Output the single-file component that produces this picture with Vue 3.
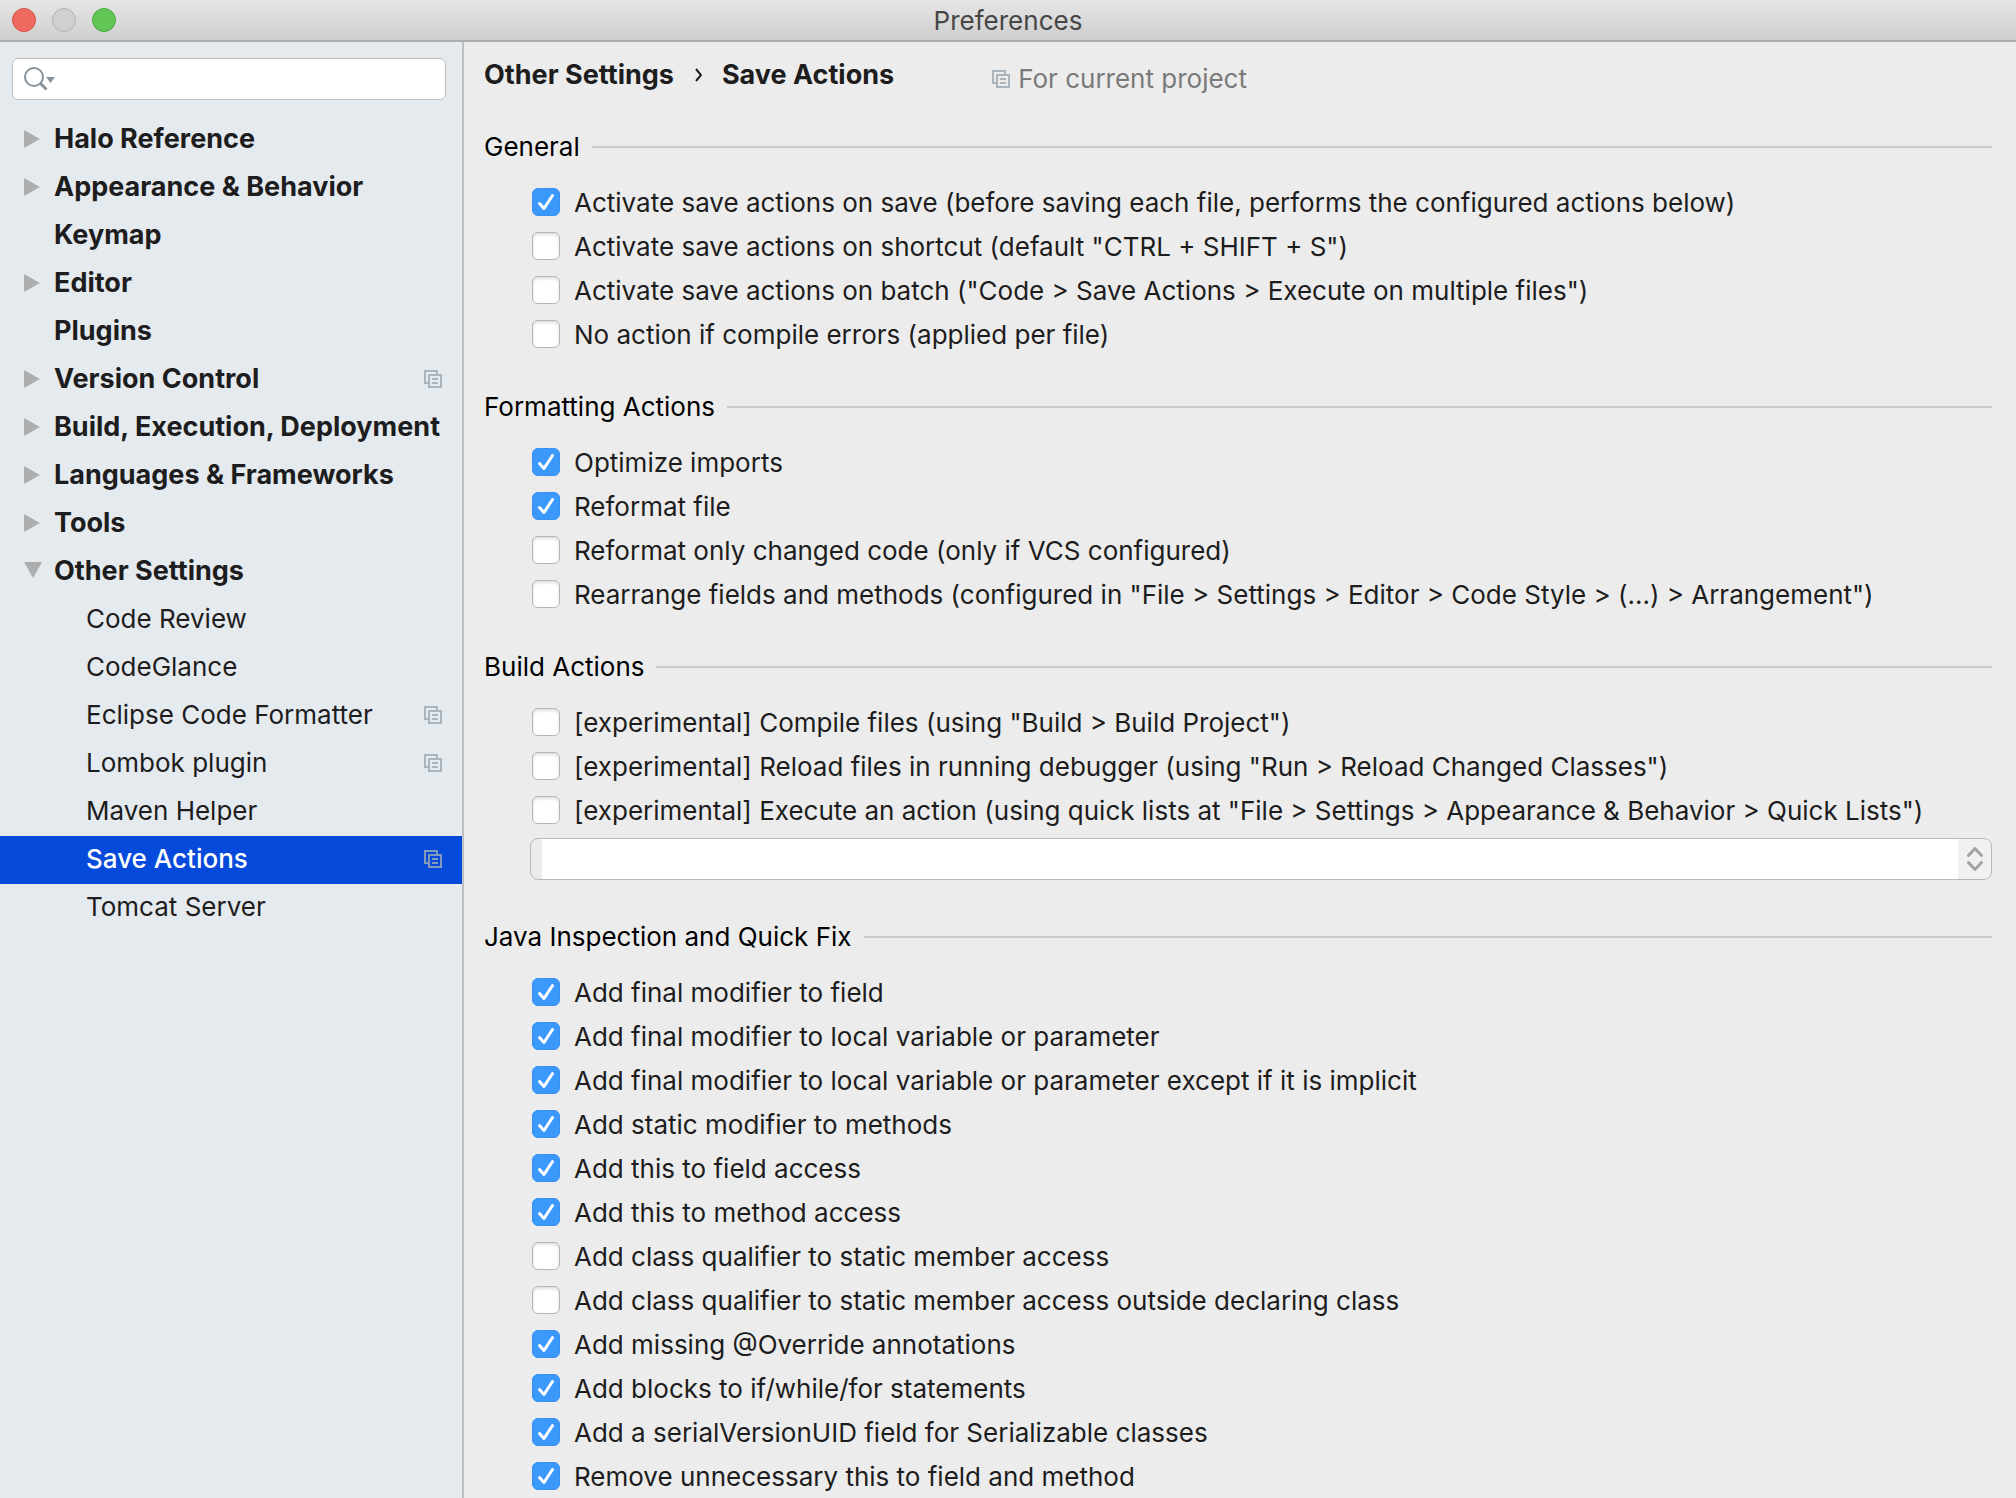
<script setup>
import { ref, reactive } from 'vue'

const query = ref('')
const selected = ref('Save Actions')
const quickList = ref('')

const tree = [
  { label: 'Halo Reference', group: true, arrow: 'closed' },
  { label: 'Appearance & Behavior', group: true, arrow: 'closed' },
  { label: 'Keymap', group: true },
  { label: 'Editor', group: true, arrow: 'closed' },
  { label: 'Plugins', group: true },
  { label: 'Version Control', group: true, arrow: 'closed', project: true },
  { label: 'Build, Execution, Deployment', group: true, arrow: 'closed' },
  { label: 'Languages & Frameworks', group: true, arrow: 'closed' },
  { label: 'Tools', group: true, arrow: 'closed' },
  { label: 'Other Settings', group: true, arrow: 'open' },
  { label: 'Code Review' },
  { label: 'CodeGlance' },
  { label: 'Eclipse Code Formatter', project: true },
  { label: 'Lombok plugin', project: true },
  { label: 'Maven Helper' },
  { label: 'Save Actions', project: true },
  { label: 'Tomcat Server' }
]

const sections = reactive([
  {
    title: 'General',
    options: [
      { label: 'Activate save actions on save (before saving each file, performs the configured actions below)', on: true },
      { label: 'Activate save actions on shortcut (default "CTRL + SHIFT + S")', on: false },
      { label: 'Activate save actions on batch ("Code > Save Actions > Execute on multiple files")', on: false },
      { label: 'No action if compile errors (applied per file)', on: false }
    ]
  },
  {
    title: 'Formatting Actions',
    options: [
      { label: 'Optimize imports', on: true },
      { label: 'Reformat file', on: true },
      { label: 'Reformat only changed code (only if VCS configured)', on: false },
      { label: 'Rearrange fields and methods (configured in "File > Settings > Editor > Code Style > (...) > Arrangement")', on: false }
    ]
  },
  {
    title: 'Build Actions',
    quickLists: true,
    options: [
      { label: '[experimental] Compile files (using "Build > Build Project")', on: false },
      { label: '[experimental] Reload files in running debugger (using "Run > Reload Changed Classes")', on: false },
      { label: '[experimental] Execute an action (using quick lists at "File > Settings > Appearance & Behavior > Quick Lists")', on: false }
    ]
  },
  {
    title: 'Java Inspection and Quick Fix',
    options: [
      { label: 'Add final modifier to field', on: true },
      { label: 'Add final modifier to local variable or parameter', on: true },
      { label: 'Add final modifier to local variable or parameter except if it is implicit', on: true },
      { label: 'Add static modifier to methods', on: true },
      { label: 'Add this to field access', on: true },
      { label: 'Add this to method access', on: true },
      { label: 'Add class qualifier to static member access', on: false },
      { label: 'Add class qualifier to static member access outside declaring class', on: false },
      { label: 'Add missing @Override annotations', on: true },
      { label: 'Add blocks to if/while/for statements', on: true },
      { label: 'Add a serialVersionUID field for Serializable classes', on: true },
      { label: 'Remove unnecessary this to field and method', on: true }
    ]
  }
])
</script>

<template>
  <div class="window">
    <header class="titlebar">
      <div class="lights">
        <button class="light close" type="button" aria-label="Close"></button>
        <button class="light minimize" type="button" aria-label="Minimize" disabled></button>
        <button class="light zoom" type="button" aria-label="Zoom"></button>
      </div>
      <h1>Preferences</h1>
    </header>

    <div class="body">
      <aside class="sidebar">
        <div class="search">
          <svg class="lens" width="34" height="26" viewBox="0 0 34 26" aria-hidden="true">
            <circle cx="11" cy="11" r="9" fill="none" stroke="#87939a" stroke-width="2" />
            <path d="M17 17L23.500 23.500" stroke="#87939a" stroke-width="3" />
            <path d="M23 11h9l-4.500 6z" fill="#87939a" />
          </svg>
          <input v-model="query" type="text" aria-label="Search settings" />
        </div>

        <nav>
          <ul class="tree">
            <li v-for="item in tree" :key="item.label">
              <button
                type="button"
                class="node"
                :class="{ group: item.group, selected: item.label === selected }"
                @click="selected = item.label"
              >
                <span v-if="item.group" class="arrow">
                  <svg v-if="item.arrow" width="18" height="18" viewBox="0 0 18 18" aria-hidden="true">
                    <path :d="item.arrow === 'open' ? 'M0 0H18L9 16z' : 'M0 0L16 9L0 18z'" fill="#adadad" />
                  </svg>
                </span>
                <span class="label">{{ item.label }}</span>
                <svg v-if="item.project" class="copies" width="18" height="18" viewBox="0 0 18 18" aria-hidden="true">
                  <path d="M5 13H1V1H13V4M5 5H17V17H5zM8 9h6M8 13h6" />
                </svg>
              </button>
            </li>
          </ul>
        </nav>
      </aside>

      <main class="content">
        <div class="crumbs">
          <h2>
            <span>Other Settings</span>
            <svg width="8" height="14" viewBox="0 0 8 14" aria-hidden="true">
              <path d="M2 1L7 7L2 13" fill="none" stroke="#1d1d1d" stroke-width="2" />
            </svg>
            <span>Save Actions</span>
          </h2>
          <p class="scope">
            <svg class="copies" width="18" height="18" viewBox="0 0 18 18" aria-hidden="true">
              <path d="M5 13H1V1H13V4M5 5H17V17H5zM8 9h6M8 13h6" />
            </svg>
            For current project
          </p>
        </div>

        <section v-for="section in sections" :key="section.title">
          <h3>{{ section.title }}</h3>
          <div class="options">
            <label v-for="option in section.options" :key="option.label" class="option">
              <span class="box">
                <input v-model="option.on" type="checkbox" />
                <svg v-if="option.on" width="28" height="28" viewBox="0 0 28 28" aria-hidden="true">
                  <path d="M7.500 15.500L12 20.500L20.500 7.500" />
                </svg>
              </span>
              <span class="text">{{ option.label }}</span>
            </label>
            <div v-if="section.quickLists" class="combo">
              <select v-model="quickList" aria-label="Quick list">
                <option value=""></option>
              </select>
              <svg width="16" height="24" viewBox="0 0 16 24" aria-hidden="true">
                <path d="M1.500 8.500L8 1.500L14.500 8.500M1.500 15.500L8 22.500L14.500 15.500" />
              </svg>
            </div>
          </div>
        </section>
      </main>
    </div>
  </div>
</template>

<style>
body {
  margin: 0;
  background: #ececec;
}
</style>

<style scoped>
.window {
  min-height: 100vh;
  display: flex;
  flex-direction: column;
  font-family: Inter, "Liberation Sans", sans-serif;
  font-size: 26px;
  line-height: 36px;
  color: #1d1d1d;
}

h1,
h2,
h3,
p,
ul {
  margin: 0;
  padding: 0;
  font: inherit;
}

button,
input,
select {
  box-sizing: border-box;
  margin: 0;
  padding: 0;
  font: inherit;
  color: inherit;
}

.titlebar {
  box-sizing: border-box;
  height: 42px;
  padding: 0 12px;
  display: grid;
  grid-template-columns: 1fr auto 1fr;
  align-items: center;
  background: linear-gradient(#e6e6e6, #cecece);
  border-bottom: 2px solid #adadad;
  color: #464646;
}

h1 {
  padding-top: 2px;
}

.lights {
  display: flex;
  gap: 16px;
}

.light {
  width: 24px;
  height: 24px;
  border: 1px solid;
  border-radius: 50%;
}

.close {
  background: #ee6a5e;
  border-color: #d8504a;
}

.minimize {
  background: #d0d0d0;
  border-color: #b2b2b2;
}

.zoom {
  background: #61c654;
  border-color: #4fa73e;
}

.body {
  flex: 1;
  display: flex;
}

.sidebar {
  flex: none;
  width: 462px;
  background: #e5eaef;
  border-right: 2px solid #bfbfc1;
}

.search {
  display: grid;
  align-items: center;
  margin: 16px 16px 16px 12px;
}

.search > * {
  grid-area: 1 / 1;
}

.search input {
  width: 100%;
  height: 42px;
  padding: 0 12px 0 50px;
  background: #fff;
  border: 1px solid #b9bdc0;
  border-radius: 6px;
}

.lens {
  z-index: 1;
  margin-left: 11px;
  pointer-events: none;
}

.tree {
  list-style: none;
}

.node {
  width: 100%;
  height: 48px;
  padding: 0 20px 2px 86px;
  display: flex;
  align-items: center;
  background: none;
  border: 0;
  text-align: left;
  white-space: nowrap;
}

.node.group {
  padding-left: 24px;
  font-size: 27px;
  font-weight: 700;
}

.arrow {
  flex: none;
  width: 30px;
  display: flex;
}

.label {
  flex: 1;
}

.node.selected {
  background: #064adb;
  color: #fff;
  font-weight: 500;
}

.copies {
  flex: none;
  fill: none;
  stroke: #a9b4bc;
  stroke-width: 2;
}

.selected .copies {
  stroke: #8299bb;
}

.content {
  flex: 1;
  min-width: 0;
  padding: 15px 24px 0 20px;
  background: #ececec;
}

.crumbs {
  display: flex;
  align-items: flex-start;
  gap: 98px;
  margin-bottom: 32px;
}

h2 {
  display: flex;
  align-items: center;
  gap: 20px;
  font-size: 27px;
  font-weight: 700;
}

.scope {
  display: flex;
  align-items: center;
  gap: 8px;
  padding-top: 4px;
  color: #7a7a7a;
}

section + section {
  margin-top: 33px;
}

h3 {
  display: flex;
  align-items: center;
  gap: 12px;
  color: #000;
}

h3::after {
  content: "";
  flex: 1;
  height: 2px;
  background: #cbcbcb;
}

.options {
  display: flow-root;
  padding: 15px 0 0 46px;
}

.option {
  height: 44px;
  padding-left: 2px;
  display: flex;
  align-items: center;
  gap: 14px;
  white-space: nowrap;
}

.text {
  padding-top: 2px;
}

.box {
  display: grid;
}

.box > * {
  grid-area: 1 / 1;
}

.box input {
  appearance: none;
  width: 28px;
  height: 28px;
  background: #fff;
  border: 1px solid #b4b4b4;
  border-radius: 6px;
  box-shadow: inset 0 2px 3px #e0e0e0;
}

.box input:checked {
  background: #3b99fc;
  border-color: #3891f2;
  box-shadow: none;
}

.box svg {
  z-index: 1;
  fill: none;
  stroke: #fff;
  stroke-width: 3;
  stroke-linecap: round;
  stroke-linejoin: round;
  pointer-events: none;
}

.combo {
  display: grid;
  align-items: center;
  margin: 6px 0;
}

.combo > * {
  grid-area: 1 / 1;
}

.combo select {
  appearance: none;
  width: 100%;
  height: 42px;
  padding: 0 40px 0 16px;
  background: linear-gradient(to right, #ececec 11px, #fff 11px, #fff calc(100% - 33px), #f1f1f1 calc(100% - 33px));
  border: 1px solid #b9b9b9;
  border-radius: 8px;
}

.combo svg {
  z-index: 1;
  justify-self: end;
  margin-right: 9px;
  fill: none;
  stroke: #a3a3a3;
  stroke-width: 3;
  stroke-linecap: round;
  stroke-linejoin: round;
  pointer-events: none;
}
</style>
